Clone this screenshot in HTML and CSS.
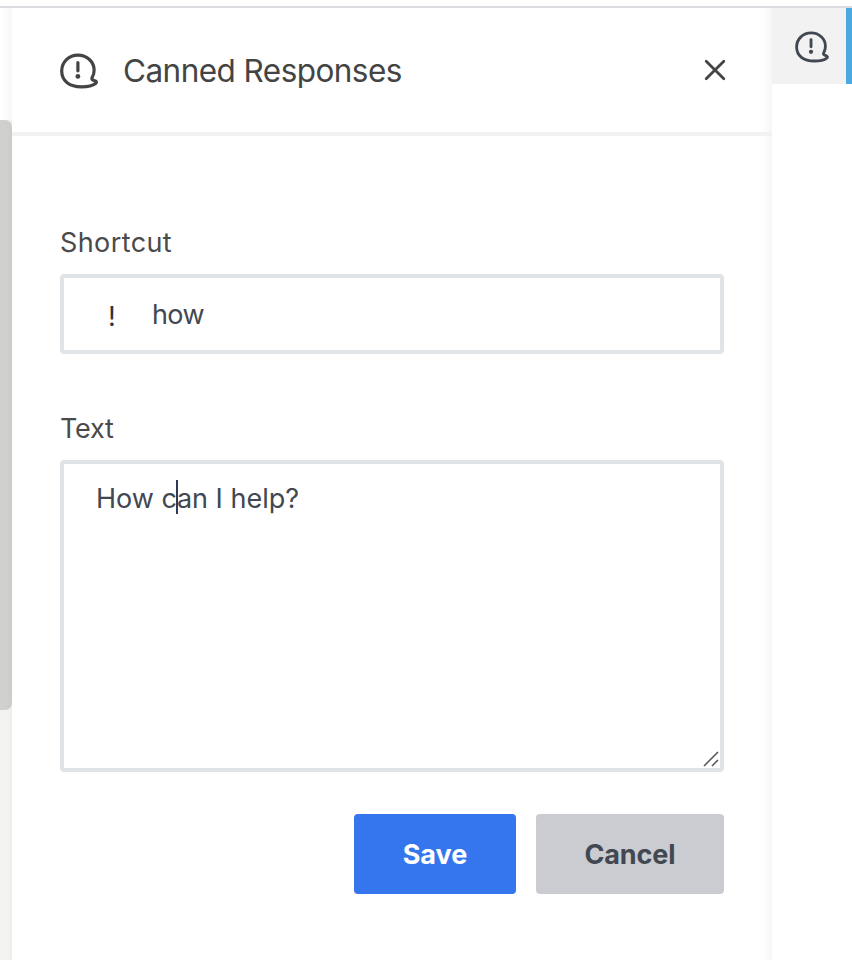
FILE: index.html
```html
<!DOCTYPE html>
<html lang="en">
<head>
<meta charset="utf-8">
<title>Canned Responses</title>
<link rel="stylesheet" href="styles.css">
</head>
<body>
<svg class="defs" width="0" height="0" aria-hidden="true">
  <symbol id="canned" viewBox="0 0 38 36">
    <path d="M18 2.100C27 2.100 34.100 8.700 34.100 17.200C34.100 20 33.400 22.400 32.200 24.400C31.500 25.800 32 26.700 33.300 27.200L35.400 28Q37.300 29 35.600 30.500C32.800 32.700 27 33.800 21.500 33.800C9.500 33.800 1.700 28 1.700 18C1.700 8.900 9 2.100 18 2.100Z" fill="none" stroke="currentColor" stroke-width="3.200" stroke-linejoin="round"/>
    <path d="M17.900 9.700V17.800" fill="none" stroke="currentColor" stroke-width="3.200" stroke-linecap="round"/>
    <circle cx="17.900" cy="23.400" r="2.400" fill="currentColor"/>
  </symbol>
</svg>
<div class="app">
  <div class="scroll"><div class="thumb"></div></div>
  <main class="panel">
    <header class="head">
      <svg class="head-icon"><use href="#canned"/></svg>
      <h1>Canned Responses</h1>
      <svg class="close" viewBox="0 0 24 24"><path d="M3.200 3.200L20.800 20.800M20.800 3.200L3.200 20.800"/></svg>
    </header>
    <form class="form">
      <div class="label shortcut-label">Shortcut</div>
      <div class="field shortcut"><span class="bang">!</span><span class="value">how</span></div>
      <div class="label text-label">Text</div>
      <div class="field area"><span class="value">How c<i class="caret"></i>an I help?</span>
        <svg class="grip" viewBox="0 0 16 16"><path d="M1 15L15 1M9 15L15 9"/></svg>
      </div>
      <div class="actions">
        <button type="button" class="save">Save</button>
        <button type="button" class="cancel">Cancel</button>
      </div>
    </form>
  </main>
  <aside class="rail">
    <div class="tab"><svg class="tab-icon"><use href="#canned"/></svg></div>
  </aside>
</div>
</body>
</html>
```
FILE: styles.css
```css
* { box-sizing: border-box; }
body {
  margin: 0;
  background: #fff;
  font-family: Inter, "Liberation Sans", sans-serif;
  color: #414852;
}
svg { display: block; flex: none; }
.defs { position: absolute; }
.app {
  display: grid;
  grid-template-columns: 12px 760px 80px;
  height: 960px;
  padding-top: 8px;
  background: linear-gradient(#fff 6px, #dcdde1 6px, #dcdde1 8px, #fff 8px);
}
.scroll {
  padding-top: 112px;
  background: linear-gradient(90deg, #fff, #f7f7f7) 0 0 / 12px 112px no-repeat, linear-gradient(90deg, #f3f3f1 50%, #eeeeed);
}
.thumb {
  height: 590px;
  border-radius: 0 7px 7px 0;
  background: linear-gradient(90deg, #d0d0ce 50%, #cbcbca);
}
.panel { background: linear-gradient(90deg, #fff 744px, #fdfdfd 752px, #f6f6f6 760px); }
.head {
  display: flex;
  align-items: center;
  height: 128px;
  padding: 0 45px 0 48px;
  border-bottom: 4px solid #f2f2f2;
  color: #444;
}
.head-icon { width: 38px; height: 36px; margin-top: 2px; }
h1 {
  margin: 1px auto 0 25px;
  font-size: 31.500px;
  line-height: 40px;
  font-weight: 400;
  letter-spacing: -0.550px;
}
.close { width: 24px; height: 24px; fill: none; stroke: #444; stroke-width: 2.800; stroke-linecap: round; }
.form { padding: 89px 48px 0; }
.label {
  height: 49px;
  font-size: 27px;
  line-height: 36px;
  color: #4a4a4a;
}
.shortcut-label { letter-spacing: 0.400px; }
.text-label { letter-spacing: -0.200px; }
.field {
  position: relative;
  border: 4px solid #e1e4e7;
  border-radius: 4px;
  background: #fff;
  font-size: 27px;
  line-height: 36px;
}
.shortcut { display: flex; align-items: center; height: 80px; margin-bottom: 57px; padding: 2px 0 0 44px; }
.shortcut .value { letter-spacing: -0.600px; }
.bang { width: 44px; padding-top: 4px; color: #2f343d; }
.area { height: 312px; padding: 16px 32px; }
.caret {
  display: inline-block;
  width: 2px;
  height: 34px;
  margin: 0 -1px;
  vertical-align: -6px;
  background: #2f3b55;
}
.grip { position: absolute; right: 1px; bottom: 1px; width: 16px; height: 16px; fill: none; stroke: #555; stroke-width: 1.500; }
.actions { display: flex; justify-content: flex-end; gap: 20px; margin-top: 42px; }
button {
  height: 80px;
  padding: 1px 0 0;
  border: 0;
  border-radius: 4px;
  font: 700 27px/36px Inter, "Liberation Sans", sans-serif;
}
.save { width: 162px; background: #3575ee; color: #fff; }
.cancel { width: 188px; background: #cbccd1; color: #414852; letter-spacing: -0.100px; }
.tab {
  display: flex;
  align-items: center;
  height: 76px;
  padding-left: 23px;
  border-right: 6px solid #4ba9e2;
  background: #f2f2f2;
}
.tab-icon { width: 34px; height: 32px; margin-top: 2px; }
```
